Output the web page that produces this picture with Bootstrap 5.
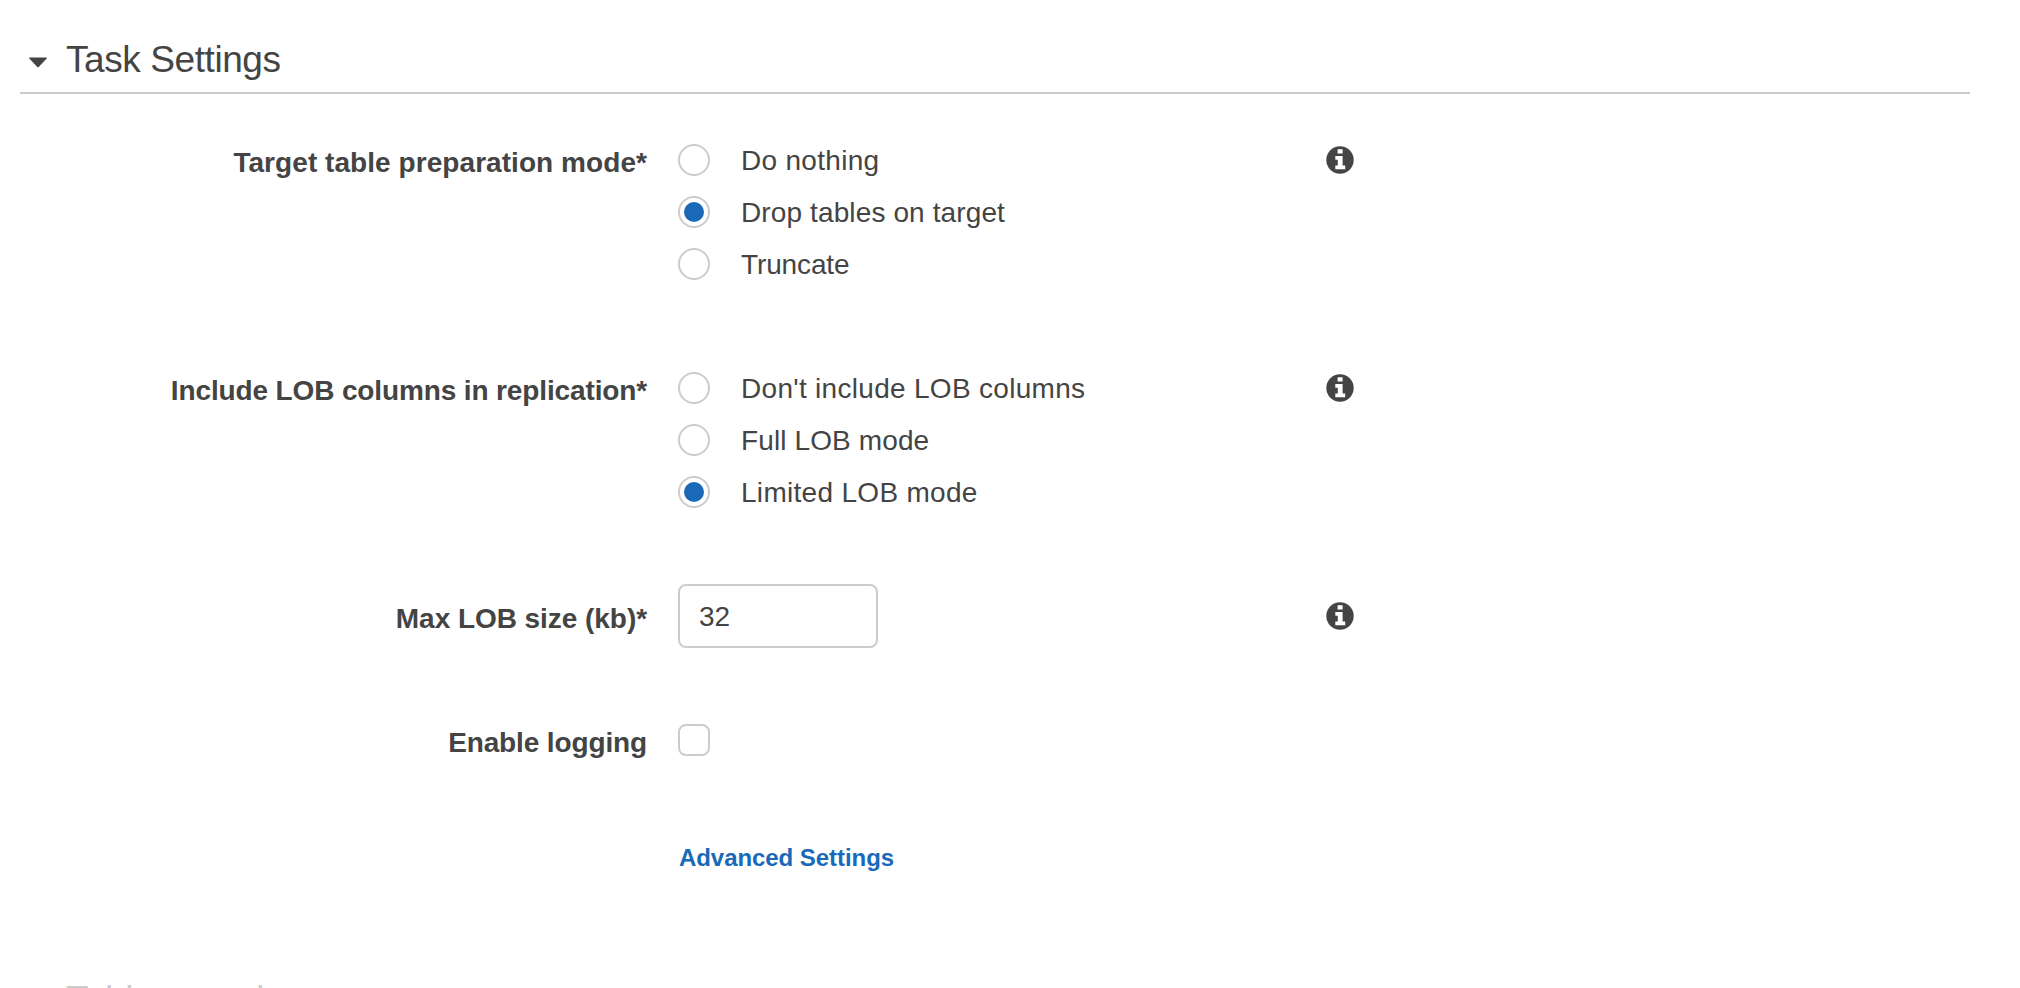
<!DOCTYPE html>
<html lang="en">
<head>
<meta charset="utf-8">
<meta name="viewport" content="width=device-width, initial-scale=1">
<title>Task Settings</title>
<link href="https://cdn.jsdelivr.net/npm/bootstrap@5.3.0/dist/css/bootstrap.min.css" rel="stylesheet">
<style>
  :root { --ink: #444; --line: #ccc; --accent: #1a69b9; }
  body { font-family: "Liberation Sans", Arial, sans-serif; font-size: 28px; line-height: 32px; color: var(--ink); background: #fff; }
  .page { height: 988px; padding: 38px 50px 0 20px; }
  .section-title { font-size: 37px; line-height: 44px; letter-spacing: -.42px; }
  .section-head { height: 56px; border-bottom: 2px solid var(--line); padding-left: 9px; }
  .caret { width: 18px; height: 11px; margin: 19px 19px 0 0; }
  .settings { padding-top: 50px; }
  .field-label { width: 627px; margin-right: 31px; padding-top: 3px; letter-spacing: .06px; }
  .field-label.tight, .tight { letter-spacing: -.13px; }
  .wide { letter-spacing: .3px; }
  .mid { letter-spacing: .12px; }
  .field-body { width: 648px; }
  .options { gap: 20px; }
  .option { gap: 31px; height: 32px; }
  .option .form-check-label { padding-top: 1px; }
  .form-check-input.pick { width: 32px; height: 32px; margin: 0; padding: 4px; float: none; border: 2px solid var(--line); background-color: #fff; background-clip: content-box; }
  .form-check-input.pick[type=checkbox] { border-radius: 8px; }
  .form-check-input.pick:checked { background-color: var(--accent); background-image: none; border-color: var(--line); }
  .size-input { width: 200px; height: 64px; padding: 2px 20px 0 19px; border: 2px solid var(--line); border-radius: 8px; font-size: 28px; color: var(--ink); }
  .info { width: 28px; height: 28px; margin-top: 2px; }
  .size-row .field-label { padding-top: 19px; letter-spacing: -.05px; }
  .size-row .info { margin-top: 18px; }
  .gap-after-modes { margin-bottom: 92px; }
  .gap-after { margin-bottom: 76px; }
  .gap-before-link { margin-bottom: 85px; }
  .advanced { font-size: 24px; line-height: 28px; letter-spacing: -.06px; color: var(--accent); margin-left: 659px; }
  .next-section { padding: 106px 0 0 46px; }
  .next-section .section-title { letter-spacing: -.1px; color: #ccc; }
</style>
</head>
<body>
<svg class="d-none" xmlns="http://www.w3.org/2000/svg">
  <symbol id="info" viewBox="0 0 28 28">
    <circle cx="14" cy="14" r="13.7" fill="#444"/>
    <path fill="#fff" d="M11.6 3.2h5v4.3h-5zM9.3 10h7.3v9.4h2.6v3.8H9.3v-3.8h2.5v-5.6H9.3z"/>
  </symbol>
</svg>
<main class="page overflow-hidden">
  <header class="section-head d-flex align-items-start">
    <svg class="caret flex-shrink-0" viewBox="0 0 18 11"><path fill="#444" d="M.8.4h16.4c.8 0 1 .7.5 1.2L9.7 10c-.5.5-.9.5-1.4 0L.3 1.6C-.2 1.1 0 .4.8.4z"/></svg>
    <h2 class="section-title fw-normal m-0">Task Settings</h2>
  </header>

  <form class="settings">
    <div class="d-flex align-items-start gap-after-modes">
      <div class="field-label fw-bold text-end">Target table preparation mode*</div>
      <div class="field-body options d-flex flex-column">
        <div class="option d-flex"><input class="form-check-input pick" type="radio" name="prep" id="p1"><label class="form-check-label wide" for="p1">Do nothing</label></div>
        <div class="option d-flex"><input class="form-check-input pick" type="radio" name="prep" id="p2" checked><label class="form-check-label mid" for="p2">Drop tables on target</label></div>
        <div class="option d-flex"><input class="form-check-input pick" type="radio" name="prep" id="p3"><label class="form-check-label tight" for="p3">Truncate</label></div>
      </div>
      <svg class="info"><use href="#info"/></svg>
    </div>

    <div class="d-flex align-items-start gap-after">
      <div class="field-label fw-bold text-end tight">Include LOB columns in replication*</div>
      <div class="field-body options d-flex flex-column">
        <div class="option d-flex"><input class="form-check-input pick" type="radio" name="lob" id="l1"><label class="form-check-label wide" for="l1">Don't include LOB columns</label></div>
        <div class="option d-flex"><input class="form-check-input pick" type="radio" name="lob" id="l2"><label class="form-check-label mid" for="l2">Full LOB mode</label></div>
        <div class="option d-flex"><input class="form-check-input pick" type="radio" name="lob" id="l3" checked><label class="form-check-label wide" for="l3">Limited LOB mode</label></div>
      </div>
      <svg class="info"><use href="#info"/></svg>
    </div>

    <div class="size-row d-flex align-items-start gap-after">
      <label class="field-label fw-bold text-end" for="size">Max LOB size (kb)*</label>
      <div class="field-body d-flex"><input class="form-control size-input" id="size" type="text" value="32"></div>
      <svg class="info"><use href="#info"/></svg>
    </div>

    <div class="d-flex align-items-start gap-before-link">
      <label class="field-label fw-bold text-end tight" for="log">Enable logging</label>
      <div class="field-body d-flex"><input class="form-check-input pick" type="checkbox" id="log"></div>
    </div>

    <a class="advanced d-block fw-bold text-decoration-none" href="#">Advanced Settings</a>
  </form>

  <section class="next-section">
    <h2 class="section-title fw-normal m-0">Table mappings</h2>
  </section>
</main>
<script src="https://cdn.jsdelivr.net/npm/bootstrap@5.3.0/dist/js/bootstrap.bundle.min.js"></script>
</body>
</html>
